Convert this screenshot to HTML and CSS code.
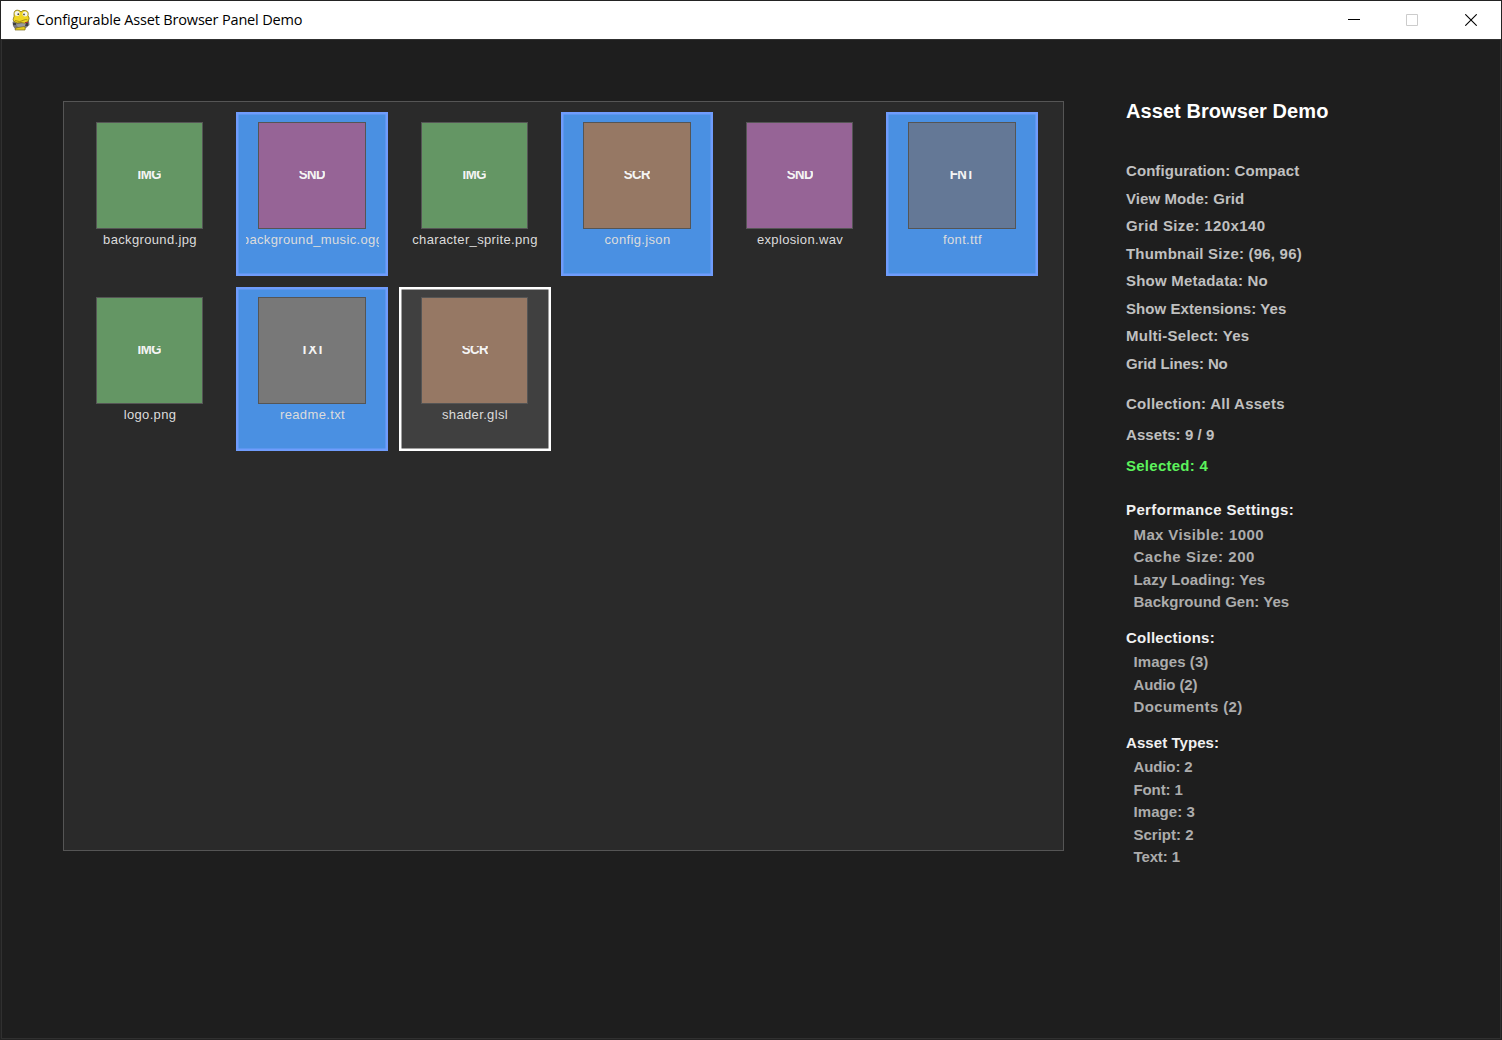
FILE: index.html
```html
<!DOCTYPE html>
<html lang="en">
<head>
<meta charset="utf-8">
<title>Configurable Asset Browser Panel Demo</title>
<link rel="stylesheet" href="styles.css">
</head>
<body>
<div class="window">
  <header class="titlebar">
    <svg class="app-icon" viewBox="0 0 20 22" width="20" height="22">
      <path d="M3 12 L1.500 13 L2 17 L4 20 L7 21 L15 19 L18.500 16 L18 12 Z" fill="#77777a"/>
      <path d="M2 14h3v2H2zM13 14h4v3h-4zM8 15h2v2H8z" fill="#3f3f42"/>
      <path d="M4 21 Q4 18.500 7 18.500 L13 17.500 Q15 18 14 21 Z" fill="#e8cb1c" stroke="#796b18" stroke-width=".7"/>
      <path d="M5 15.500 L15 13.500 L14 17 L7 18 Z" fill="#9a9a9d"/>
      <path d="M2.500 9 Q3.500 7.500 3 5 Q3 1 6.500 1.200 Q9 1.200 10 3 Q11.500 .8 14.500 1.500 Q18 2.500 17 6.500 Q19 9 17.500 12 Q14 15.500 10 13.500 Q6 15 3 12.500 Q1.500 11 2.500 9Z" fill="#efd522" stroke="#857515" stroke-width=".8"/>
      <circle cx="6.2" cy="4.600" r="2.500" fill="#f4f4ee"/><circle cx="14" cy="5" r="2.500" fill="#f4f4ee"/>
      <circle cx="7.300" cy="5.200" r=".9" fill="#444"/><circle cx="13" cy="5.400" r=".9" fill="#444"/>
      <path d="M4 11.500 Q9 14 13 11 Q15 10 16.500 11" fill="none" stroke="#a38c12" stroke-width=".9"/>
      <path d="M14 13.500h3" stroke="#a33"/>
    </svg>
    <span class="caption">Configurable Asset Browser Panel Demo</span>
    <div class="controls">
      <svg width="12" height="12" viewBox="0 0 12 12"><path d="M0 5.5h12" stroke="#000"/></svg>
      <svg width="12" height="12" viewBox="0 0 12 12"><path d="M.5.5h11v11H.5z" fill="none" stroke="#ccc"/></svg>
      <svg class="close" width="12" height="12" viewBox="0 0 12 12"><path d="M.3.3l11.4 11.4M11.7.3L.3 11.7" stroke="#000" stroke-width="1.1"/></svg>
    </div>
  </header>
  <main class="content">
    <section class="browser">
      <div class="asset"><div class="thumb image"><span>IMG</span></div><div class="name">background.jpg</div></div>
      <div class="asset selected"><div class="thumb audio"><span>SND</span></div><div class="name">background_music.ogg</div></div>
      <div class="asset"><div class="thumb image"><span>IMG</span></div><div class="name">character_sprite.png</div></div>
      <div class="asset selected"><div class="thumb script"><span>SCR</span></div><div class="name">config.json</div></div>
      <div class="asset"><div class="thumb audio"><span>SND</span></div><div class="name">explosion.wav</div></div>
      <div class="asset selected"><div class="thumb font"><span>FNT</span></div><div class="name">font.ttf</div></div>
      <div class="asset"><div class="thumb image"><span>IMG</span></div><div class="name">logo.png</div></div>
      <div class="asset selected"><div class="thumb text"><span>TXT</span></div><div class="name">readme.txt</div></div>
      <div class="asset hovered"><div class="thumb script"><span>SCR</span></div><div class="name">shader.glsl</div></div>
    </section>
    <aside class="info">
      <h1 class="track-1">Asset Browser Demo</h1>
      <ul class="settings">
        <li class="track-1">Configuration: Compact</li>
        <li class="track-1">View Mode: Grid</li>
        <li class="track-4">Grid Size: 120x140</li>
        <li class="track-2">Thumbnail Size: (96, 96)</li>
        <li class="track-2">Show Metadata: No</li>
        <li class="track-1">Show Extensions: Yes</li>
        <li class="track-3">Multi-Select: Yes</li>
        <li class="tight">Grid Lines: No</li>
      </ul>
      <ul class="status">
        <li class="track-3">Collection: All Assets</li>
        <li class="track-1">Assets: 9 / 9</li>
        <li class="count track-3">Selected: 4</li>
      </ul>
      <h2 class="first track-4">Performance Settings:</h2>
      <ul class="details">
        <li class="track-4">Max Visible: 1000</li>
        <li class="track-5">Cache Size: 200</li>
        <li class="track-1">Lazy Loading: Yes</li>
        <li>Background Gen: Yes</li>
      </ul>
      <h2 class="track-3">Collections:</h2>
      <ul class="details">
        <li class="track-1">Images (3)</li>
        <li class="tight">Audio (2)</li>
        <li class="track-4">Documents (2)</li>
      </ul>
      <h2 class="track-1">Asset Types:</h2>
      <ul class="details">
        <li class="tight">Audio: 2</li>
        <li class="tight">Font: 1</li>
        <li class="track-1">Image: 3</li>
        <li>Script: 2</li>
        <li class="tight">Text: 1</li>
      </ul>
    </aside>
  </main>
</div>
</body>
</html>
```
FILE: styles.css
```css
* { box-sizing: border-box; }
body { margin: 0; background: #1e1e1e; font-family: "Liberation Sans", Arial, sans-serif; }
.window { display: flex; flex-direction: column; width: 1502px; height: 1040px; border: 1px solid #232323; background: #1e1e1e; overflow: hidden; }
.titlebar { display: flex; flex: none; align-items: center; height: 38px; background: #fff; padding: 0 24px 0 10px; }
.app-icon { flex: none; }
.caption { margin-left: 5px; font: 14.5px/20px "Open Sans", "Noto Sans", sans-serif; letter-spacing: -.17px; color: #000; white-space: nowrap; }
.controls { display: flex; gap: 46px; margin-left: auto; }
.close { margin-left: 1px; }
.content { display: flex; flex: 1; padding: 61px 0 0 61px; border: 1px solid #303030; }

/* Asset grid */
.browser {
  display: grid; grid-template-columns: repeat(6, 152px); grid-auto-rows: 164.5px;
  gap: 10.5px; align-content: start; flex: none;
  width: 1000.5px; height: 750.4px; padding: 9.5px;
  border: 1px solid #555; background: #2a2a2a;
}
.asset { display: flex; flex-direction: column; align-items: center; padding-top: 10px; overflow: hidden; }
.selected { background: #4a90e2; box-shadow: inset 0 0 0 2.5px #6f9cfc; }
.hovered { background: #404040; box-shadow: inset 0 0 0 2.5px #fff; }
.thumb { display: flex; align-items: center; justify-content: center; flex: none; width: 107.5px; height: 107.5px; border: 1px solid #555; }
.thumb span { height: 8px; margin-bottom: 1px; line-height: 5px; overflow: hidden; font-size: 15px; font-weight: bold; letter-spacing: -.6px; color: #f4f4f4; transform: scaleX(.88); }
.image { background: #649664; }
.audio { background: #966496; }
.script { background: #967864; }
.font { background: #647896; }
.text { background: #787878; }
.name { display: flex; justify-content: center; width: 133px; margin-top: 2.5px; padding-left: 1px; overflow: hidden; font-size: 13px; line-height: 16px; letter-spacing: .35px; color: #dcdcdc; white-space: nowrap; }

/* Info column */
.info { padding-left: 62.5px; font-weight: bold; white-space: nowrap; }
.info h1, .info h2, .info ul { margin: 0; padding: 0; list-style: none; }
.info h1 { font-size: 20px; line-height: 20px; color: #fff; }
.info h2 { margin-top: 10.75px; font-size: 15px; line-height: 25px; color: #f0f0f0; }
.info .first { margin-top: 15.5px; }
.info ul { font-size: 15px; }
.info .settings { margin-top: 36.3px; color: #c0c0c0; }
.settings li { line-height: 27.5px; }
.info .status { margin-top: 10.5px; color: #c0c0c0; }
.status li { line-height: 31.25px; }
.status .count { color: #5cf25c; }
.info .details { padding: 1.75px 0 0 7.5px; color: #acacac; }
.details li { line-height: 22.5px; }
.tight { letter-spacing: -.12px; }
.track-1 { letter-spacing: .07px; }
.track-2 { letter-spacing: .21px; }
.track-3 { letter-spacing: .26px; }
.track-4 { letter-spacing: .38px; }
.track-5 { letter-spacing: .54px; }
```
